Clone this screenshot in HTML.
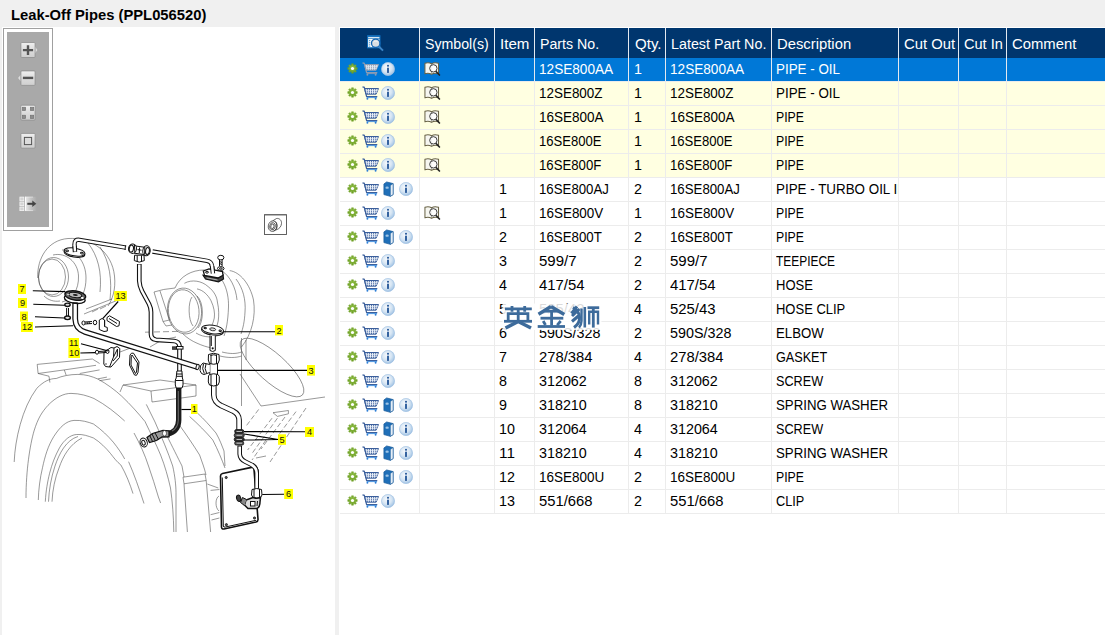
<!DOCTYPE html>
<html><head><meta charset="utf-8"><title>Leak-Off Pipes</title>
<style>
html,body{margin:0;padding:0}
body{width:1105px;height:635px;overflow:hidden;position:relative;background:#f0f0f0;font-family:"Liberation Sans",sans-serif;font-size:15.4px}
.abs,.t,.row,.hd,.vs,.vsh,.ic,.clip{position:absolute}
.t{white-space:nowrap;line-height:17px;height:17px;transform-origin:0 50%;display:block}
.row{left:340px;width:765px;height:23px;border-bottom:1px solid #ececec}
.hd{background:#00366e}
.vs{top:82px;width:1px;height:432px;background:#ececec}
.vsh{top:28px;width:1px;height:30px;background:#e4e9f0}
.clip{height:23px;overflow:hidden}
#title{left:10.6px;top:6.6px;font-weight:bold;font-size:14.7px;line-height:17px;white-space:nowrap;transform-origin:0 50%;transform:scaleX(1.0054);color:#000}
#lp{left:2px;top:27px;width:333px;height:608px;background:#fff}
#rp{left:339px;top:27px;width:766px;height:608px;background:#fff}
#tb{left:3px;top:28px;width:48px;height:201px;border:1px solid #a0a0a0;background:#fff}
#tbi{left:7px;top:32px;width:42px;height:195px;background:#a9a9a9}
</style></head><body>
<svg width="0" height="0" style="position:absolute">
<defs>
<radialGradient id="ig" cx=".42" cy=".38" r=".65"><stop offset="0" stop-color="#f7fafd"/><stop offset=".55" stop-color="#d6e5f3"/><stop offset="1" stop-color="#9cc0e3"/></radialGradient>
<radialGradient id="gg" cx=".5" cy=".4" r=".6"><stop offset="0" stop-color="#8fbe45"/><stop offset="1" stop-color="#6c9f22"/></radialGradient>
<symbol id="gear" viewBox="0 0 12 12"><path d="M4.97,2.40 L5.00,0.85 L7.00,0.85 L7.03,2.40 L7.82,2.72 L8.94,1.65 L10.35,3.06 L9.28,4.18 L9.60,4.97 L11.15,5.00 L11.15,7.00 L9.60,7.03 L9.28,7.82 L10.35,8.94 L8.94,10.35 L7.82,9.28 L7.03,9.60 L7.00,11.15 L5.00,11.15 L4.97,9.60 L4.18,9.28 L3.06,10.35 L1.65,8.94 L2.72,7.82 L2.40,7.03 L0.85,7.00 L0.85,5.00 L2.40,4.97 L2.72,4.18 L1.65,3.06 L3.06,1.65 L4.18,2.72Z" fill="url(#gg)" stroke="#6fa024" stroke-width=".5" stroke-linejoin="round"/><circle cx="6" cy="6" r="1.75" fill="#fff"/></symbol>
<symbol id="cart" viewBox="0 0 17 14"><path d="M2.600,2.500 H16.500 L14.100,8.200 H3.900 Z" fill="#e9eff8" stroke="#3b5f9c" stroke-width="1"/><path d="M5.300,2.500 V8 M7.400,2.500 V8 M9.500,2.500 V8 M11.600,2.500 V8 M13.700,2.500 V8" stroke="#3b5f9c" stroke-width=".9"/><path d="M3,4.400 H15.800 M3.500,6.300 H15" stroke="#e9eff8" stroke-width=".7"/><path d="M.5,.8 L2.300,1.300 L4.600,10.700 H15.300" fill="none" stroke="#3b5f9c" stroke-width="1.200"/><path d="M4.800,11.600 H15" stroke="#3d8fe0" stroke-width=".9"/><circle cx="5.400" cy="12.700" r=".95" fill="#2f7fd6"/><circle cx="13.600" cy="12.700" r=".95" fill="#2f7fd6"/></symbol>
<symbol id="carts" viewBox="0 0 17 14"><path d="M2.600,2.500 H16.500 L14.100,8.200 H3.900 Z" fill="#e2e8f0" stroke="#8c9bb2" stroke-width="1"/><path d="M5.300,2.500 V8 M7.400,2.500 V8 M9.500,2.500 V8 M11.600,2.500 V8 M13.700,2.500 V8" stroke="#8c9bb2" stroke-width=".9"/><path d="M3,4.400 H15.800 M3.500,6.300 H15" stroke="#e2e8f0" stroke-width=".7"/><path d="M.5,.8 L2.300,1.300 L4.600,10.700 H15.300" fill="none" stroke="#8c9bb2" stroke-width="1.200"/><path d="M4.800,11.600 H15" stroke="#8c9bb2" stroke-width=".9"/><circle cx="5.400" cy="12.700" r=".95" fill="#8c9bb2"/><circle cx="13.600" cy="12.700" r=".95" fill="#8c9bb2"/></symbol>
<symbol id="info" viewBox="0 0 14 14"><circle cx="7" cy="7" r="6.700" fill="url(#ig)"/><circle cx="7" cy="7" r="6.500" fill="none" stroke="#9dc0e2" stroke-width=".6"/><rect x="6.050" y="5.700" width="1.900" height="5.200" fill="#2c5c9c"/><rect x="6.050" y="2.900" width="1.900" height="1.700" fill="#2c5c9c"/></symbol>
<symbol id="book" viewBox="0 0 12 17"><path d="M1 3L4 .8L11 2.6V14.6L8 16.5L1 14.6Z" fill="#1f6fb8" stroke="#185a99" stroke-width=".8"/><path d="M8 4.6L11 2.6V14.6L8 16.5Z" fill="#e6eef6" stroke="#185a99" stroke-width=".6"/><ellipse cx="4.5" cy="7" rx="1.8" ry="1.3" fill="#9cc3e6"/></symbol>
<symbol id="sym" viewBox="0 0 18 15"><path d="M1,1.400 C3.400,.500 6,.700 8,1.900 C10,.700 12.600,.500 15.400,1.400 V12.300 C12.600,11.600 10,11.800 8,13 C6,11.800 3.400,11.600 1,12.300 Z" fill="#f6f6f0" stroke="#6a6448" stroke-width="1.100"/><path d="M8,1.900 V13" stroke="#8a8a7a" stroke-width=".8"/><circle cx="9.900" cy="6.700" r="3.900" fill="#fff" fill-opacity=".85" stroke="#333" stroke-width="1"/><path d="M12.600,9.700 L16.800,14.300" stroke="#222" stroke-width="1.600"/></symbol>
<symbol id="hdic" viewBox="0 0 17 17"><rect x=".6" y=".8" width="12.400" height="12" fill="#fff" stroke="#0d6ab8" stroke-width="1.100"/><rect x=".6" y=".6" width="12.400" height="1.300" fill="#0d6ab8"/><path d="M.6,3.300 H13" stroke="#0d6ab8" stroke-width=".8"/><path d="M2.200 5.400H3.300M2.200 7.300H3.300M2.200 9.200H3.300M2.200 11.100H3.300" stroke="#0d6ab8" stroke-width=".9"/><circle cx="8.700" cy="8.300" r="4.200" fill="#d9dde2" stroke="#1465b2" stroke-width="1.300"/><path d="M6.500,7.200 C7.500,6 9.500,5.800 10.800,7" stroke="#f4f6f8" stroke-width="1" fill="none"/><path d="M11.900,11.500 L16,15.600" stroke="#3c86c8" stroke-width="1.900"/></symbol>
</defs>

</svg>
<div id="title" class="abs">Leak-Off Pipes (PPL056520)</div>
<div id="lp" class="abs"></div>
<div id="rp" class="abs"></div>
<div id="tb" class="abs"></div>
<div id="tbi" class="abs"></div>
<svg class="abs" style="left:0;top:27px" width="335" height="608" viewBox="0 27 335 608">
<style>
.g{fill:none;stroke:#444;stroke-width:.55}
.k{fill:none;stroke:#111;stroke-width:1}
.kf{fill:#fff;stroke:#111;stroke-width:1}
.po{fill:none;stroke:#111;stroke-linecap:butt;stroke-linejoin:round}
.pi{fill:none;stroke:#fff;stroke-linecap:butt;stroke-linejoin:round}
.ld{fill:none;stroke:#000;stroke-width:1.150}
.lb{fill:#ffff00}
.lt{font-family:"Liberation Sans",sans-serif;font-size:9.2px;fill:#111}
</style>
<!-- ===== grey background lines ===== -->
<g class="g">
<!-- left turbo -->
<ellipse cx="52" cy="277" rx="13.5" ry="18"/>
<ellipse cx="53.5" cy="277" rx="15" ry="19.5"/>
<path d="M53,255 C66,252 78,262 78.500,276 C79,290 72,300 62,302"/>
<path d="M62,250 C76,249 86,262 86,278 C86,290 82,298 77,303"/>
<path d="M37.700,278 C37,258 48,240 68,238.500 C92,237 112,252 114.500,276 C116,290 112,300 108,306"/>
<path d="M88,243 C98,256 102,272 100,292"/>
<path d="M100,247 C110,262 112,280 110,300"/>
<path d="M44,296 C48,300 54,302 60,301"/>
<path d="M86,309 L112,299 M84,314 L118,300 M92,312 L98,309 M100,309 L106,306"/>
<!-- right turbo -->
<ellipse cx="183.700" cy="311" rx="15.300" ry="21.300" transform="rotate(-6 183.700 311)"/>
<ellipse cx="184.500" cy="311" rx="17" ry="23" transform="rotate(-6 184.500 311)"/>
<path d="M192,297 C188,302 188,320 193,326"/>
<path d="M197,296 C204,302 204,322 198,328"/>
<path d="M175,288 C180,276 192,270 204,270 C222,270 229,290 228.500,307 C228,322 226,330 224,336"/>
<path d="M184.400,283.300 C192,279 202,281 208,286.500 C214,291 217,297 217.400,302 C219,309 219,316 218.200,321 C217,327 215,331 212.700,333.700"/>
<path d="M197,288.900 C203,290 208,295 211,300.700 C214,307 215,313 214.300,318 C213,324 211,328 208,330.600"/>
<path d="M145,332.200 L178,331.400" stroke-dasharray="6 3"/>
<path d="M182.800,333.700 C187,338 192,341 197,343.200 C202,345.500 207,347 211,347.800"/>
<path d="M229.700,270.600 C240,272 250,284 253.500,300 C256,316 252,334 241.500,347"/>
<path d="M236,279 C243,288 246,300 245,312 C244.500,322 243,328 241,334"/>
<path d="M222,271 C230,276 236,288 237,300"/>
<path d="M154,292 L163.500,289.500 L175,288 M154,292 L163,321.500 L169.500,320 L160,291"/>
<path d="M163,321.500 L166,326 L172,325"/>
<path d="M196,333 C204,338 214,338 222,334"/>
<path d="M241.500,338 L241.500,406"/>
<path d="M246,340 L246,360"/>
<path d="M220,356 C228,358 236,358 241.500,356 M222,352 C230,354 236,354 241.500,352"/>
<ellipse cx="272" cy="367.500" rx="41" ry="14" transform="rotate(42 272 367.500)"/>
<path d="M240,374 L261,406 L325,397"/>
<!-- engine block -->
<path d="M37.200,364.400 L92.400,359 L99.600,363.500 M37.200,364.400 L38.100,373.500 L49,376.200 L49.900,382.500 M64.300,369.900 L96,365.300 M64.300,369.900 L66.200,375.300 M38.100,373.500 L64.300,369.900 M79.700,373.500 L99.600,369.900 M97.800,378.900 L106.900,377.100 M99.600,380.700 L110.500,378.900"/>
<path d="M0,0"/>
<path d="M123,385 L160,380 L196,385 L196,396 L152,402 L151,391 L123,385 M151,391 L196,385"/>
<path d="M123,385 L120,392 M120,352 L133,347"/>
<path d="M150,347 L162,340 L176,337"/>
<!-- flywheel arcs -->
<path d="M14.200,462 C15,440 22,408 36.800,388.300 C44,381 50,378.500 56.200,378.500 C62,376 70,374.400 77.900,374.400 C86,374.400 92,376.500 97.800,379 C107,384 115,390 121.500,396 C131,405 138,413 145,421.500 C151,434 156,444 160.600,455 C165,466 168,477 170.500,488 C172.500,502 173.500,516 173.800,532"/>
<path d="M26,498 C26,470 30,445 34,431 C38,418 42,412 48,405.300 C56,397 64,393.400 71,393.400 C80,393.400 88,396 94,398.500 C106,405 116,413 124.700,421"/>
<path d="M134,433 C140,444 145,455 148.500,466 C152,476 155.500,487 158.400,497 L160.600,503"/>
<path d="M38.300,500 C38.500,490 40,478 42.500,467.700 C45,456 48,446 53.800,436.500 C60,427 66,421 74,420.400 C82,420 88,422 93.500,424 C102,430 108,436 113.300,442.200 C118,448 122,454 124.700,459"/>
<path d="M128.600,461.700 C134,474 139,488 144,503.500"/>
<path d="M45.300,501.700 C46,490 47.500,482 49.600,473.300 C52,464 55,456 59.500,447.800 C64,440 70,435 76.500,434.500 C83,434 88,436 93.500,438 C100,442 106,448 110.500,453.500 C114,458 117,462 120.900,465 C126,474 130,484 133,493.600"/>
<path d="M48.500,501.700 C49,490 51,478 55,466 C59,454 66,440 78,436.500"/>
<path d="M52,501.700 C52.500,490 55,478 59,468 C63,456 70,444 82,438"/>
<path d="M146.300,404.400 L155,422 C162,438 168,452 172.700,466 C175,476 176,486 176,492.500 L176,532"/>
<path d="M166.500,435 C172,446 178,458 182,466 L184,477"/>
<path d="M178.600,424 C186,434 194,446 199.600,455 C202,462 204.500,468 206,475"/>
<path d="M189.600,416.500 C198,424 206,432 212.800,440 C218,450 222,460 225,468"/>
<path d="M197.400,413 C204,419 210,426 216,433 C220,440 222,446 224,451 L225,466"/>
<path d="M183,477.200 L205,474 L206.200,480.500 L184,483.800 Z M184,483.800 L187.400,532 M206.200,480.500 L210.600,532"/>
<path d="M207.300,484 L218.300,488 M210.600,490.400 L219.400,489.500 M210.600,514.700 L219.400,512.500 M211.500,520 L219.400,518"/>
<path d="M219,496 C215,498 215,508 219,511"/>
<!-- right lower hatch lines -->
<g stroke-dasharray="5 2.500">
<path d="M258.700,409.400 L245.400,427"/>
<path d="M306,408 L270,462"/>
<path d="M272,418.200 L247.600,450"/>
<path d="M277.400,418.200 L252,453.500"/>
<path d="M285,417 L261,449"/>
<path d="M296,411.600 L279.600,433.600"/>
<path d="M266,440 L252,460"/>
</g>
<path d="M273,412.700 L288.400,410.500 L288.400,413.800 L277.400,416.400 Z"/>
<path d="M256,458 L266,456"/>
</g>
<!-- ===== pipes ===== -->
<!-- top left pipe -->
<path class="po" stroke-width="4.400" d="M75,252 L74.500,244.500 Q74.300,239.200 79.500,239.900 L126,247.600"/>
<path class="pi" stroke-width="2.400" d="M75,252 L74.500,244.500 Q74.300,239.200 79.500,239.900 L126.500,247.700"/>
<path class="k" d="M125.500,245.500 L125,250"/>
<!-- top right pipe -->
<path class="po" stroke-width="4.400" d="M152.500,251.500 L207,260.800 Q211.500,261.500 212,266 L213,272"/>
<path class="pi" stroke-width="2.400" d="M152,251.400 L207,260.800 Q211.500,261.500 212,266 L213,272.500"/>
<!-- down pipe from T -->
<path class="po" stroke-width="4.700" d="M139.300,264 L139.300,281 Q139.500,286 142,291 L149,304 Q151,308 151,312 L151,334 Q151,339 156,339.800 L174,341 Q179,341.500 179.500,346 L179.500,372"/>
<path class="pi" stroke-width="2.500" d="M139.300,264.500 L139.300,281 Q139.500,286 142,291 L149,304 Q151,308 151,312 L151,334 Q151,339 156,339.800 L174,341 Q179,341.500 179.500,346 L179.500,372"/>
<!-- pipe 12 -->
<path class="po" stroke-width="5.800" d="M75.200,302 L75.200,319 Q75.500,329 85,332 L197.500,367"/>
<path class="pi" stroke-width="3.300" d="M75.200,302 L75.200,319 Q75.500,329 85,332 L197,366.800"/>
<ellipse class="kf" cx="197.600" cy="367" rx="1.500" ry="2.700" transform="rotate(17 197.600 367)"/>
<!-- pipe from tee 3 to hose clips -->
<path class="po" stroke-width="5.600" d="M213.800,386 L213.800,395 Q214,402 221,405.500 L233,411 Q239,414 239.100,420 L239.100,431"/>
<path class="pi" stroke-width="3.600" d="M213.800,386 L213.800,395 Q214,402 221,405.500 L233,411 Q239,414 239.100,420 L239.100,431"/>
<!-- pipe from clips to elbow 6 -->
<path class="po" stroke-width="4.600" d="M239.700,445.500 L239.700,454 Q240,459 245,461.500 L252,465 Q256.500,467.500 256.700,473 L256.700,490"/>
<path class="pi" stroke-width="2.600" d="M239.700,446.500 L239.700,454 Q240,459 245,461.500 L252,465 Q256.500,467.500 256.700,473 L256.700,490"/>
<!-- hose 1 -->
<path d="M178.700,386 L178.700,420 Q178.500,431.500 167.500,434" fill="none" stroke="#1c1c1c" stroke-width="5.400" stroke-linecap="butt"/>
<path d="M178.300,391 L178.300,420 Q178,428 172,431" fill="none" stroke="#6a6a6a" stroke-width="1.100"/>
<!-- ===== fittings ===== -->
<!-- left top flange -->
<g transform="rotate(9 74.600 252)"><ellipse cx="74.600" cy="253.200" rx="10.500" ry="3.900" class="kf"/><ellipse cx="74.600" cy="252" rx="10.500" ry="3.900" class="kf"/><ellipse cx="67" cy="252" rx="1.400" ry=".9" class="k" stroke-width=".7"/><ellipse cx="82" cy="252" rx="1.400" ry=".9" class="k" stroke-width=".7"/></g>
<path class="po" stroke-width="4.400" d="M75,252 L74.600,246"/><path class="pi" stroke-width="2.400" d="M75,251.500 L74.600,245.500"/>
<!-- T fitting -->
<g>
<path d="M134,245.800 L145,247.300 L145,254.600 L134,253.200 Z" fill="#fff" stroke="#111" stroke-width="1"/>
<ellipse cx="132.500" cy="248.700" rx="4" ry="4.700" class="kf" transform="rotate(8 132.500 248.700)" stroke-width="1.600"/>
<ellipse cx="131.400" cy="248.600" rx="2.100" ry="3.500" class="k" transform="rotate(8 131.400 248.600)" stroke-width=".8"/>
<path d="M134.500,245 L134.800,252.500" class="k" stroke-width=".7"/>
<ellipse cx="146.500" cy="250.800" rx="3.700" ry="5" class="kf" transform="rotate(8 146.500 250.800)" stroke-width="1.600"/>
<ellipse cx="147.500" cy="251" rx="1.900" ry="3.500" class="k" transform="rotate(8 147.500 251)" stroke-width=".8"/>
<path d="M144.800,247 L144.600,254.700" class="k" stroke-width=".7"/>
<path d="M134.600,255.200 L144,255.200 L144.300,260.600 Q139.300,263.600 134.300,260.600 Z" class="kf" stroke-width="1.500"/>
<path d="M137.200,255.500 L137.200,261.800 M141.500,255.500 L141.500,261.800" class="k" stroke-width=".7"/>
<path d="M137.500,249.600 L141.500,250.200 M139.500,247.500 L139.300,253" class="k" stroke-width=".9"/>
</g>
<!-- right top flange -->
<g>
<path d="M203,275.200 L205.500,279 L218.500,281.800 L223.600,279 L223,275 L218,278 L205,275.500 Z" fill="#444" stroke="#111" stroke-width="1.100"/>
<path d="M203.300,271 L209,268.800 L222.500,271.500 L223,275.200 L218,278 L204.500,275.500 Z" fill="#fff" stroke="#111" stroke-width="1.300"/>
<path d="M206.500,277.800 L217.500,280" stroke="#ccc" stroke-width=".8" fill="none"/>
<ellipse cx="207" cy="272.200" rx="1.500" ry=".9" class="k" stroke-width=".7"/>
</g>
<path class="po" stroke-width="4.400" d="M212,266 L213,273.500"/><path class="pi" stroke-width="2.400" d="M211.900,265 L213,274"/>
<!-- bolt at right flange -->
<ellipse cx="220.800" cy="257.600" rx="3.100" ry="2.300" class="kf" stroke-width="1"/>
<path d="M219.500,260 L219.500,266 M222.100,260 L222.100,266" class="k" stroke-width=".9"/>
<path d="M219.500,261.500 L222,262.500 M219.500,263.500 L222,264.500" class="k" stroke-width=".6"/>
<ellipse cx="220.800" cy="268.500" rx="3.300" ry="1.900" class="kf" stroke-width="1.100"/><ellipse cx="220.800" cy="268.500" rx="1.300" ry=".7" class="k" stroke-width=".7"/>
<!-- flange 7 -->
<g transform="rotate(8 75.200 296)">
<ellipse cx="75.200" cy="299" rx="10.500" ry="4.300" fill="#fff" stroke="#111" stroke-width="1.300"/>
<ellipse cx="75.200" cy="295.500" rx="10.500" ry="4.600" fill="#666" stroke="#111" stroke-width="1.400"/>
<ellipse cx="75.200" cy="295" rx="6.500" ry="2.600" fill="#bbb" stroke="#111" stroke-width="1"/>
<ellipse cx="75.200" cy="295" rx="2.500" ry="1" fill="#222"/>
<ellipse cx="82.500" cy="297" rx="1.400" ry=".9" fill="#fff"/><ellipse cx="68" cy="295.500" rx="1.300" ry=".8" fill="#ccc"/>
</g>
<rect x="72.700" y="302.300" width="5" height="1.500" fill="#111"/>
<!-- washer 9, screw 8 -->
<ellipse cx="67.500" cy="304.800" rx="2.700" ry="1.700" fill="#ddd" stroke="#111" stroke-width="1.400"/>
<path d="M66.600,308 L66.600,316 M68.500,308 L68.500,316" class="k" stroke-width="1"/>
<ellipse cx="67.500" cy="317.800" rx="2.900" ry="1.800" fill="#ddd" stroke="#111" stroke-width="1.400"/>
<!-- screw & clip 13 -->
<ellipse cx="83.500" cy="323" rx="1.600" ry="2" class="kf" stroke-width=".9"/>
<path d="M85,322 L92,321.500 M85,324 L92,323.500 M87,322 L87.500,324 M89,321.800 L89.500,323.800" class="k" stroke-width=".7"/>
<ellipse cx="95" cy="322.500" rx="1.700" ry="2.300" class="kf" stroke-width="1"/>
<path d="M99.300,320 Q102.200,317 104.600,320 L104.600,326.500 L107.300,327.500 L107.300,331 L104,331.500 L99.300,329.500 Z" class="kf" stroke-width="1.100"/>
<path d="M104.600,320 L104.600,326.500" class="k" stroke-width=".8"/>
<path d="M107,317.500 L109.500,315.800 L119.500,321.500 L119,325.800 L116.500,326.500 L107,320.500 Z" class="kf" stroke-width="1"/>
<path d="M109,318.500 L117,323.500" class="k" stroke-width=".7"/>
<!-- cover plate 10/11 -->
<path d="M104,352.300 L111,347.500 L114,348 L113.500,357 L109.500,367 L105.500,366.500 L103.800,364 Z" class="kf" stroke-width="1.100"/>
<path d="M114,348 L117,346.500 L119.800,348.500 L119.500,357.500 L111,367 L109.500,367" class="k" stroke-width="1.100"/>
<path d="M113.500,357 L117.500,349 M117.500,349 L117.300,356 L113,361" class="k" stroke-width=".7"/>
<circle cx="106" cy="364" r=".7" fill="#111"/>
<ellipse cx="97" cy="352.200" rx="1.600" ry="2" class="kf" stroke-width="1"/>
<path d="M98.700,351.500 L106,351 M98.700,353 L106,352.500" class="k" stroke-width=".7"/>
<ellipse cx="107.500" cy="351.500" rx="1.500" ry="2" class="kf" stroke-width=".9"/>
<!-- gasket -->
<path d="M131.500,353.200 L133.500,353.200 L139,362 L138,372.500 L136.500,375.300 L134.500,375 L129.500,365 L130,355 Z" class="kf" stroke-width="1.100"/>
<path d="M132,355 L137.500,363 L136.500,372 L135.500,373.500 L131,365 L131.300,356.500 Z" class="k" stroke-width=".6"/>
<!-- small clamp on down pipe -->
<rect x="176.500" y="346.500" width="6.500" height="2.600" class="kf" stroke-width="1"/><rect x="172.300" y="346.800" width="4" height="2.600" fill="#444" stroke="#111" stroke-width=".6"/>
<!-- hose coupling above hose 1 -->
<path d="M176.900,371 L181.900,371 L182.400,378 L183,380 L183,385 L182,388 L176.200,388 L175.300,385 L175.300,380 L176.200,378 Z" class="kf" stroke-width="1.300"/>
<path d="M176.500,374 L182.200,374 M176.400,376.300 L182.400,376.300 M175.500,380.500 L183,380.500" class="k" stroke-width=".8"/>
<!-- hose end fitting -->
<path d="M169,430.800 L163,430.300 L152.500,433.500 L147,437.500 L149.500,442.500 L156.500,440.500 L162,437 L169,436.800 Z" fill="#999" stroke="#111" stroke-width="1.300"/>
<path d="M152,434 L155.500,441 M155,432.800 L158.500,439.500 M149.800,435.600 L152.700,441.800" class="k" stroke-width="1"/>
<ellipse cx="164.500" cy="433.300" rx="2" ry="2.800" fill="#fff" stroke="#111" stroke-width=".6"/>
<ellipse cx="143.700" cy="442.500" rx="3.500" ry="4.600" class="kf" stroke-width="1.300" transform="rotate(-20 143.700 442.500)"/>
<ellipse cx="143.500" cy="442.700" rx="1.600" ry="2.500" class="k" stroke-width=".8" transform="rotate(-20 143.500 442.700)"/>
<!-- flange 2 -->
<g transform="rotate(8 212.600 329.700)">
<ellipse cx="212.600" cy="330.900" rx="11" ry="4.200" class="kf" stroke-width="1.200"/>
<ellipse cx="212.600" cy="329.500" rx="11" ry="4.200" class="kf" stroke-width="1.200"/>
<ellipse cx="212.600" cy="329.300" rx="3" ry="1.400" fill="#ddd" stroke="#111" stroke-width=".8"/>
<ellipse cx="205" cy="329" rx="1.200" ry=".7" class="k" stroke-width=".6"/><ellipse cx="220.300" cy="329.700" rx="1.200" ry=".7" class="k" stroke-width=".6"/>
</g>
<path d="M210,335.500 L210,350.500 Q212.600,352.500 215.300,350.500 L215.300,335.800" class="kf" stroke-width="1.100"/>
<path d="M211.300,336 L211.300,346" class="k" stroke-width=".6"/>
<circle cx="212.700" cy="348.300" r="1.100" fill="#111"/>
<!-- tee 3 -->
<g>
<path d="M209.800,362 L217.500,362 L217.500,376 L209.800,376 Z" class="kf" stroke-width="1.500"/>
<path d="M208.500,354.500 Q213.700,352 219,354.500 L219.300,360 L218,363.500 Q213.700,365 209.500,363.500 L208.300,360 Z" class="kf" stroke-width="1.700"/>
<path d="M211,354.500 L211,363.800 M216.500,354.500 L216.500,363.800" class="k" stroke-width=".6"/>
<path d="M210.500,355.500 Q213.700,354 217,355.500" class="k" stroke-width=".8"/>
<path d="M208.500,376 L209.500,374.500 Q213.700,373 218,374.500 L219.300,376.500 L219.300,382 L218,385 Q213.700,387 209.500,385 L208.300,382 Z" class="kf" stroke-width="1.700"/>
<path d="M211,374.500 L211,385.500 M216.500,374.500 L216.500,385.500" class="k" stroke-width=".6"/>
<path d="M209.800,364.500 L203,363 Q199.500,365 200,370.500 Q201,374.500 204,374.500 L209.800,372.500" class="kf" stroke-width="1.700"/>
<path d="M203.500,364 Q201.500,368.500 204.300,373.500 M206,364 Q204,368.500 206.500,373" class="k" stroke-width=".6"/>
</g>
<!-- hose clips 4/5 -->
<g>
<rect x="234.700" y="429.600" width="9" height="3.600" rx="1.500" fill="#333" stroke="#111" stroke-width=".8"/>
<rect x="234.200" y="433.300" width="10" height="4" rx="1.800" fill="#555" stroke="#111" stroke-width=".8"/>
<rect x="234.200" y="437.400" width="10" height="4" rx="1.800" fill="#333" stroke="#111" stroke-width=".8"/>
<rect x="234.700" y="441.400" width="9" height="3.600" rx="1.500" fill="#555" stroke="#111" stroke-width=".8"/>
<path d="M236.500,431.500 L242,431.500 M236.500,435.300 L242,435.300 M236.500,439.500 L242,439.500 M236.500,443.200 L242,443.200" stroke="#ddd" stroke-width=".8" fill="none"/>
</g>
<!-- plate -->
<path d="M220.500,476.500 Q220.300,474 222.500,473.500 L251.500,467.400 Q254,467.100 254,469.500 L258,519 Q258.300,521.300 256,522 L224,529 Q221.500,529.300 221.500,527 Z" fill="#fff" stroke="#111" stroke-width="1.600"/>
<path d="M222.300,477.500 L223.300,526 Q223.500,527.500 225.500,527 L256,520.300" class="k" stroke-width=".7"/>
<circle cx="226.200" cy="477.500" r="1.100" fill="#555" stroke="#111" stroke-width=".8"/><circle cx="254.500" cy="518" r="1.100" fill="#555" stroke="#111" stroke-width=".8"/><circle cx="226.400" cy="524.700" r="1.100" fill="#555" stroke="#111" stroke-width=".8"/>
<!-- pipe over plate -->
<path class="po" stroke-width="4.600" d="M252,465 Q256.500,467.500 256.700,473 L256.700,490"/>
<path class="pi" stroke-width="2.600" d="M251,464.500 Q256.500,467.300 256.700,473 L256.700,490"/>
<!-- elbow 6 -->
<g>
<path d="M252,489.500 Q256.700,487.500 261.500,489.500 L262,495 L260.500,497.500 Q256.700,499 253,497.500 L251.500,495 Z" class="kf" stroke-width="1.700"/>
<path d="M254,489 L254,498 M259.500,489 L259.500,498" class="k" stroke-width=".6"/>
<path d="M253,497.500 L246,500 L244.500,505 L248,508.500 L257,508.500 Q260,507 260,502 L260.500,497.500 Q256.700,499 253,497.500 Z" fill="#ddd" stroke="#111" stroke-width="1.500"/>
<rect x="250.500" y="501.500" width="4.500" height="4.500" class="kf" stroke-width=".8"/>
<path d="M246.500,499.500 L242.500,497.500 L240.500,502.500 L244.500,505.500" fill="#888" stroke="#111" stroke-width="1"/>
<ellipse cx="238.700" cy="498.300" rx="2.100" ry="3.300" fill="#444" stroke="#111" stroke-width="1" transform="rotate(-15 238.700 498.300)"/>
<path d="M257.500,501 L257,506" class="k" stroke-width=".6"/>
</g>
<!-- icon box -->
<rect x="264.500" y="214.700" width="22" height="19.800" fill="#fff" stroke="#505050" stroke-width=".9"/>
<path d="M264.500,214.800 H286.500" stroke="#666" stroke-width="1.100" fill="none"/>
<g fill="none" stroke="#2a2a2a" stroke-width=".7">
<ellipse cx="272.600" cy="226.100" rx="4.300" ry="5.300" transform="rotate(12 272.600 226.100)"/>
<ellipse cx="272.500" cy="226.200" rx="2.800" ry="3.600" transform="rotate(12 272.500 226.200)"/>
<ellipse cx="272.400" cy="226.300" rx="1.600" ry="2.300" transform="rotate(12 272.400 226.300)"/>
<path d="M272.800,220.800 L276.500,218.500 C279.500,218 281.800,220.500 281.500,223.500 C281.300,226.500 279.500,228.700 276.400,229.800 L273.500,231.200"/>
<path d="M275.500,221.500 C277.500,223.500 277.500,228 275.800,230"/>
</g>
<!-- ===== leader lines ===== -->
<g class="ld">
<path d="M32.800,290.700 L65.300,291.600"/><path d="M33.300,304.200 L64.700,305.300"/><path d="M35,316.700 L64.200,318"/><path d="M35,327 L73,325.700"/>
<path d="M81,343.800 L108.500,351"/><path d="M80.400,353 L95.300,352.600"/>
<path d="M118.200,301.500 L102.700,318.600"/>
<path d="M223.600,331.700 L275,331.700"/><path d="M217.500,370.400 L307,370.400"/>
<path d="M181.400,409.500 L191,409.500"/>
<path d="M244,431.600 L305.200,431.800"/><path d="M244,434 L278.200,439.500 L244,440"/>
<path d="M262.300,494.500 L284,494.300"/>
</g>
<!-- ===== labels ===== -->
<rect class="lb" x="18" y="284" width="8" height="10"/><text class="lt" x="22.0" y="292.2" text-anchor="middle">7</text>
<rect class="lb" x="18" y="298" width="9" height="10"/><text class="lt" x="22.5" y="306.2" text-anchor="middle">9</text>
<rect class="lb" x="20" y="311.5" width="8" height="10"/><text class="lt" x="24.0" y="319.7" text-anchor="middle">8</text>
<rect class="lb" x="21" y="322" width="12" height="10"/><text class="lt" x="27.0" y="330.2" text-anchor="middle">12</text>
<rect class="lb" x="68.4" y="338" width="10.6" height="10"/><text class="lt" x="73.7" y="346.2" text-anchor="middle">11</text>
<rect class="lb" x="68.4" y="348" width="11.6" height="10"/><text class="lt" x="74.2" y="356.2" text-anchor="middle">10</text>
<rect class="lb" x="114.2" y="291" width="12.7" height="10"/><text class="lt" x="120.5" y="299.2" text-anchor="middle">13</text>
<rect class="lb" x="275" y="325" width="8" height="10.4"/><text class="lt" x="279.0" y="333.6" text-anchor="middle">2</text>
<rect class="lb" x="307" y="365" width="8" height="10.6"/><text class="lt" x="311.0" y="373.8" text-anchor="middle">3</text>
<rect class="lb" x="191" y="404" width="6.5" height="10"/><text class="lt" x="194.2" y="412.2" text-anchor="middle">1</text>
<rect class="lb" x="305" y="427" width="9" height="10"/><text class="lt" x="309.5" y="435.2" text-anchor="middle">4</text>
<rect class="lb" x="278" y="434.3" width="8" height="10.5"/><text class="lt" x="282.0" y="443.0" text-anchor="middle">5</text>
<rect class="lb" x="284.2" y="489" width="8.8" height="10"/><text class="lt" x="288.6" y="497.2" text-anchor="middle">6</text>
</svg>

<svg class="abs" style="left:0;top:27px" width="60" height="210" viewBox="0 27 60 210">
<defs><linearGradient id="bg" x1="0" y1="0" x2="0" y2="1"><stop offset="0" stop-color="#f0f0f0"/><stop offset=".5" stop-color="#dcdcdc"/><stop offset="1" stop-color="#cfcfcf"/></linearGradient>
<linearGradient id="bh" x1="0" y1="0" x2="1" y2="0"><stop offset="0" stop-color="#ededed"/><stop offset=".5" stop-color="#c4c4c4"/><stop offset="1" stop-color="#a9a9a9"/></linearGradient></defs>
<!-- plus -->
<path d="M35,46.500 L37.400,50 L35,53.500 Z" fill="#dedede"/>
<rect x="20.900" y="42.500" width="14.200" height="15" rx="1" fill="url(#bg)" stroke="#8e8e8e" stroke-width=".8"/>
<path d="M22.900,50.100 H33.100 M28,45.300 V55" stroke="#555" stroke-width="2.400"/>
<!-- minus -->
<path d="M20.900,74.500 L18.100,78 L20.900,81.500 Z" fill="#dedede"/>
<rect x="20.900" y="70.900" width="14.200" height="14.500" rx="1" fill="url(#bg)" stroke="#8e8e8e" stroke-width=".8"/>
<path d="M22.900,77.900 H33.200" stroke="#555" stroke-width="2.400"/>
<!-- grid -->
<rect x="20.900" y="105.200" width="14.200" height="14.900" rx="1" fill="url(#bg)" stroke="#8e8e8e" stroke-width=".8"/>
<g fill="#8c8c8c" stroke="#707070" stroke-width=".6"><rect x="22.300" y="107.200" width="3.400" height="3.400"/><rect x="30.300" y="107.200" width="3.400" height="3.400"/><rect x="22.300" y="115.200" width="3.400" height="3.400"/><rect x="30.300" y="115.200" width="3.400" height="3.400"/></g>
<!-- square -->
<rect x="20.900" y="133.400" width="14.200" height="14.800" rx="1" fill="url(#bg)" stroke="#8e8e8e" stroke-width=".8"/>
<rect x="24.400" y="137.400" width="7.200" height="7.200" fill="#dcdcdc" stroke="#555" stroke-width="1"/>
<!-- export -->
<rect x="25" y="196.800" width="11.800" height="14.100" fill="url(#bh)"/>
<path d="M25.400,196.800 V210.900" stroke="#fff" stroke-width="1"/>
<path d="M25,197.100 H33 M25,210.600 H33" stroke="#eee" stroke-width=".6"/>
<g fill="#d4d4d4" stroke="#f4f4f4" stroke-width=".8"><rect x="19.900" y="197.100" width="3.900" height="3.600"/><rect x="19.900" y="202" width="3.900" height="3.600"/><rect x="19.900" y="207" width="3.900" height="3.600"/></g>
<path d="M27.300,203.800 H33" stroke="#444" stroke-width="2"/><path d="M32.300,200.600 L36.300,203.800 L32.300,207 Z" fill="#444"/>
</svg>

<div class="hd" style="left:340px;top:28px;width:765px;height:30px"></div>
<span class="t" style="left:425px;top:34.5px;color:#fff;transform:scaleX(0.9210)">Symbol(s)</span>
<span class="t" style="left:500px;top:34.5px;color:#fff;transform:scaleX(0.9813)">Item</span>
<span class="t" style="left:540px;top:34.5px;color:#fff;transform:scaleX(0.9219)">Parts No.</span>
<span class="t" style="left:635px;top:34.5px;color:#fff;transform:scaleX(0.9784)">Qty.</span>
<span class="t" style="left:671px;top:34.5px;color:#fff;transform:scaleX(0.9291)">Latest Part No.</span>
<span class="t" style="left:777px;top:34.5px;color:#fff;transform:scaleX(0.9631)">Description</span>
<span class="t" style="left:904px;top:34.5px;color:#fff;transform:scaleX(0.9626)">Cut Out</span>
<span class="t" style="left:964px;top:34.5px;color:#fff;transform:scaleX(0.9458)">Cut In</span>
<span class="t" style="left:1012px;top:34.5px;color:#fff;transform:scaleX(0.9640)">Comment</span>
<svg class="ic" style="left:367px;top:35px" width="17" height="17"><use href="#hdic"/></svg>
<div class="row" style="top:58px;background:#0078d7"></div>
<svg class="ic" style="left:346.5px;top:63.3px" width="11" height="11"><use href="#gear"/></svg>
<svg class="ic" style="left:361.5px;top:61.5px" width="17" height="14"><use href="#carts"/></svg>
<svg class="ic" style="left:381px;top:62px" width="14" height="14"><use href="#info"/></svg>
<svg class="ic" style="left:423.5px;top:61.5px" width="17" height="14.2"><use href="#sym"/></svg>
<span class="t" style="left:539px;top:60px;color:#fff;transform:scaleX(0.8843)">12SE800AA</span>
<span class="t" style="left:634px;top:60px;color:#fff;transform:scaleX(0.9299)">1</span>
<span class="t" style="left:670px;top:60px;color:#fff;transform:scaleX(0.8843)">12SE800AA</span>
<div class="clip" style="left:776px;top:58px;width:122px"><span class="t" style="left:0px;top:2px;color:#fff;transform:scaleX(0.8693)">PIPE - OIL</span></div>
<div class="row" style="top:82px;background:#ffffe1"></div>
<svg class="ic" style="left:346.5px;top:87.3px" width="11" height="11"><use href="#gear"/></svg>
<svg class="ic" style="left:361.5px;top:85.5px" width="17" height="14"><use href="#cart"/></svg>
<svg class="ic" style="left:381px;top:86px" width="14" height="14"><use href="#info"/></svg>
<svg class="ic" style="left:423.5px;top:85.5px" width="17" height="14.2"><use href="#sym"/></svg>
<span class="t" style="left:539px;top:84px;color:#000;transform:scaleX(0.8735)">12SE800Z</span>
<span class="t" style="left:634px;top:84px;color:#000;transform:scaleX(0.9299)">1</span>
<span class="t" style="left:670px;top:84px;color:#000;transform:scaleX(0.8735)">12SE800Z</span>
<div class="clip" style="left:776px;top:82px;width:122px"><span class="t" style="left:0px;top:2px;color:#000;transform:scaleX(0.8693)">PIPE - OIL</span></div>
<div class="row" style="top:106px;background:#ffffe1"></div>
<svg class="ic" style="left:346.5px;top:111.3px" width="11" height="11"><use href="#gear"/></svg>
<svg class="ic" style="left:361.5px;top:109.5px" width="17" height="14"><use href="#cart"/></svg>
<svg class="ic" style="left:381px;top:110px" width="14" height="14"><use href="#info"/></svg>
<svg class="ic" style="left:423.5px;top:109.5px" width="17" height="14.2"><use href="#sym"/></svg>
<span class="t" style="left:539px;top:108px;color:#000;transform:scaleX(0.8782)">16SE800A</span>
<span class="t" style="left:634px;top:108px;color:#000;transform:scaleX(0.9299)">1</span>
<span class="t" style="left:670px;top:108px;color:#000;transform:scaleX(0.8782)">16SE800A</span>
<div class="clip" style="left:776px;top:106px;width:122px"><span class="t" style="left:0px;top:2px;color:#000;transform:scaleX(0.7966)">PIPE</span></div>
<div class="row" style="top:130px;background:#ffffe1"></div>
<svg class="ic" style="left:346.5px;top:135.3px" width="11" height="11"><use href="#gear"/></svg>
<svg class="ic" style="left:361.5px;top:133.5px" width="17" height="14"><use href="#cart"/></svg>
<svg class="ic" style="left:381px;top:134px" width="14" height="14"><use href="#info"/></svg>
<svg class="ic" style="left:423.5px;top:133.5px" width="17" height="14.2"><use href="#sym"/></svg>
<span class="t" style="left:539px;top:132px;color:#000;transform:scaleX(0.8504)">16SE800E</span>
<span class="t" style="left:634px;top:132px;color:#000;transform:scaleX(0.9299)">1</span>
<span class="t" style="left:670px;top:132px;color:#000;transform:scaleX(0.8504)">16SE800E</span>
<div class="clip" style="left:776px;top:130px;width:122px"><span class="t" style="left:0px;top:2px;color:#000;transform:scaleX(0.7966)">PIPE</span></div>
<div class="row" style="top:154px;background:#ffffe1"></div>
<svg class="ic" style="left:346.5px;top:159.3px" width="11" height="11"><use href="#gear"/></svg>
<svg class="ic" style="left:361.5px;top:157.5px" width="17" height="14"><use href="#cart"/></svg>
<svg class="ic" style="left:381px;top:158px" width="14" height="14"><use href="#info"/></svg>
<svg class="ic" style="left:423.5px;top:157.5px" width="17" height="14.2"><use href="#sym"/></svg>
<span class="t" style="left:539px;top:156px;color:#000;transform:scaleX(0.8568)">16SE800F</span>
<span class="t" style="left:634px;top:156px;color:#000;transform:scaleX(0.9299)">1</span>
<span class="t" style="left:670px;top:156px;color:#000;transform:scaleX(0.8568)">16SE800F</span>
<div class="clip" style="left:776px;top:154px;width:122px"><span class="t" style="left:0px;top:2px;color:#000;transform:scaleX(0.7966)">PIPE</span></div>
<div class="row" style="top:178px;background:#ffffff"></div>
<svg class="ic" style="left:346.5px;top:183.3px" width="11" height="11"><use href="#gear"/></svg>
<svg class="ic" style="left:361.5px;top:181.5px" width="17" height="14"><use href="#cart"/></svg>
<svg class="ic" style="left:382.5px;top:181px" width="11" height="16"><use href="#book"/></svg>
<svg class="ic" style="left:399px;top:182px" width="14" height="14"><use href="#info"/></svg>
<span class="t" style="left:499px;top:180px;color:#000;transform:scaleX(0.9299)">1</span>
<span class="t" style="left:539px;top:180px;color:#000;transform:scaleX(0.8600)">16SE800AJ</span>
<span class="t" style="left:634px;top:180px;color:#000;transform:scaleX(0.9299)">2</span>
<span class="t" style="left:670px;top:180px;color:#000;transform:scaleX(0.8600)">16SE800AJ</span>
<div class="clip" style="left:776px;top:178px;width:122px"><span class="t" style="left:0px;top:2px;color:#000;transform:scaleX(0.8697)">PIPE - TURBO OIL INLET</span></div>
<div class="row" style="top:202px;background:#ffffff"></div>
<svg class="ic" style="left:346.5px;top:207.3px" width="11" height="11"><use href="#gear"/></svg>
<svg class="ic" style="left:361.5px;top:205.5px" width="17" height="14"><use href="#cart"/></svg>
<svg class="ic" style="left:381px;top:206px" width="14" height="14"><use href="#info"/></svg>
<svg class="ic" style="left:423.5px;top:205.5px" width="17" height="14.2"><use href="#sym"/></svg>
<span class="t" style="left:499px;top:204px;color:#000;transform:scaleX(0.9299)">1</span>
<span class="t" style="left:539px;top:204px;color:#000;transform:scaleX(0.8734)">16SE800V</span>
<span class="t" style="left:634px;top:204px;color:#000;transform:scaleX(0.9299)">1</span>
<span class="t" style="left:670px;top:204px;color:#000;transform:scaleX(0.8734)">16SE800V</span>
<div class="clip" style="left:776px;top:202px;width:122px"><span class="t" style="left:0px;top:2px;color:#000;transform:scaleX(0.7966)">PIPE</span></div>
<div class="row" style="top:226px;background:#ffffff"></div>
<svg class="ic" style="left:346.5px;top:231.3px" width="11" height="11"><use href="#gear"/></svg>
<svg class="ic" style="left:361.5px;top:229.5px" width="17" height="14"><use href="#cart"/></svg>
<svg class="ic" style="left:382.5px;top:229px" width="11" height="16"><use href="#book"/></svg>
<svg class="ic" style="left:399px;top:230px" width="14" height="14"><use href="#info"/></svg>
<span class="t" style="left:499px;top:228px;color:#000;transform:scaleX(0.9299)">2</span>
<span class="t" style="left:539px;top:228px;color:#000;transform:scaleX(0.8641)">16SE800T</span>
<span class="t" style="left:634px;top:228px;color:#000;transform:scaleX(0.9299)">2</span>
<span class="t" style="left:670px;top:228px;color:#000;transform:scaleX(0.8641)">16SE800T</span>
<div class="clip" style="left:776px;top:226px;width:122px"><span class="t" style="left:0px;top:2px;color:#000;transform:scaleX(0.7966)">PIPE</span></div>
<div class="row" style="top:250px;background:#ffffff"></div>
<svg class="ic" style="left:346.5px;top:255.3px" width="11" height="11"><use href="#gear"/></svg>
<svg class="ic" style="left:361.5px;top:253.5px" width="17" height="14"><use href="#cart"/></svg>
<svg class="ic" style="left:381px;top:254px" width="14" height="14"><use href="#info"/></svg>
<span class="t" style="left:499px;top:252px;color:#000;transform:scaleX(0.9299)">3</span>
<span class="t" style="left:539px;top:252px;color:#000;transform:scaleX(0.9762)">599/7</span>
<span class="t" style="left:634px;top:252px;color:#000;transform:scaleX(0.9299)">2</span>
<span class="t" style="left:670px;top:252px;color:#000;transform:scaleX(0.9762)">599/7</span>
<div class="clip" style="left:776px;top:250px;width:122px"><span class="t" style="left:0px;top:2px;color:#000;transform:scaleX(0.7746)">TEEPIECE</span></div>
<div class="row" style="top:274px;background:#ffffff"></div>
<svg class="ic" style="left:346.5px;top:279.3px" width="11" height="11"><use href="#gear"/></svg>
<svg class="ic" style="left:361.5px;top:277.5px" width="17" height="14"><use href="#cart"/></svg>
<svg class="ic" style="left:381px;top:278px" width="14" height="14"><use href="#info"/></svg>
<span class="t" style="left:499px;top:276px;color:#000;transform:scaleX(0.9299)">4</span>
<span class="t" style="left:539px;top:276px;color:#000;transform:scaleX(0.9678)">417/54</span>
<span class="t" style="left:634px;top:276px;color:#000;transform:scaleX(0.9299)">2</span>
<span class="t" style="left:670px;top:276px;color:#000;transform:scaleX(0.9678)">417/54</span>
<div class="clip" style="left:776px;top:274px;width:122px"><span class="t" style="left:0px;top:2px;color:#000;transform:scaleX(0.8467)">HOSE</span></div>
<div class="row" style="top:298px;background:#ffffff"></div>
<svg class="ic" style="left:346.5px;top:303.3px" width="11" height="11"><use href="#gear"/></svg>
<svg class="ic" style="left:361.5px;top:301.5px" width="17" height="14"><use href="#cart"/></svg>
<svg class="ic" style="left:381px;top:302px" width="14" height="14"><use href="#info"/></svg>
<span class="t" style="left:499px;top:300px;color:#000;transform:scaleX(0.9299)">5</span>
<span class="t" style="left:539px;top:300px;color:#000;transform:scaleX(0.9678)">525/43</span>
<span class="t" style="left:634px;top:300px;color:#000;transform:scaleX(0.9299)">4</span>
<span class="t" style="left:670px;top:300px;color:#000;transform:scaleX(0.9678)">525/43</span>
<div class="clip" style="left:776px;top:298px;width:122px"><span class="t" style="left:0px;top:2px;color:#000;transform:scaleX(0.8434)">HOSE CLIP</span></div>
<div class="row" style="top:322px;background:#ffffff"></div>
<svg class="ic" style="left:346.5px;top:327.3px" width="11" height="11"><use href="#gear"/></svg>
<svg class="ic" style="left:361.5px;top:325.5px" width="17" height="14"><use href="#cart"/></svg>
<svg class="ic" style="left:381px;top:326px" width="14" height="14"><use href="#info"/></svg>
<span class="t" style="left:499px;top:324px;color:#000;transform:scaleX(0.9299)">6</span>
<span class="t" style="left:539px;top:324px;color:#000;transform:scaleX(0.9311)">590S/328</span>
<span class="t" style="left:634px;top:324px;color:#000;transform:scaleX(0.9299)">2</span>
<span class="t" style="left:670px;top:324px;color:#000;transform:scaleX(0.9311)">590S/328</span>
<div class="clip" style="left:776px;top:322px;width:122px"><span class="t" style="left:0px;top:2px;color:#000;transform:scaleX(0.8599)">ELBOW</span></div>
<div class="row" style="top:346px;background:#ffffff"></div>
<svg class="ic" style="left:346.5px;top:351.3px" width="11" height="11"><use href="#gear"/></svg>
<svg class="ic" style="left:361.5px;top:349.5px" width="17" height="14"><use href="#cart"/></svg>
<svg class="ic" style="left:381px;top:350px" width="14" height="14"><use href="#info"/></svg>
<span class="t" style="left:499px;top:348px;color:#000;transform:scaleX(0.9299)">7</span>
<span class="t" style="left:539px;top:348px;color:#000;transform:scaleX(0.9620)">278/384</span>
<span class="t" style="left:634px;top:348px;color:#000;transform:scaleX(0.9299)">4</span>
<span class="t" style="left:670px;top:348px;color:#000;transform:scaleX(0.9620)">278/384</span>
<div class="clip" style="left:776px;top:346px;width:122px"><span class="t" style="left:0px;top:2px;color:#000;transform:scaleX(0.8212)">GASKET</span></div>
<div class="row" style="top:370px;background:#ffffff"></div>
<svg class="ic" style="left:346.5px;top:375.3px" width="11" height="11"><use href="#gear"/></svg>
<svg class="ic" style="left:361.5px;top:373.5px" width="17" height="14"><use href="#cart"/></svg>
<svg class="ic" style="left:381px;top:374px" width="14" height="14"><use href="#info"/></svg>
<span class="t" style="left:499px;top:372px;color:#000;transform:scaleX(0.9299)">8</span>
<span class="t" style="left:539px;top:372px;color:#000;transform:scaleX(0.9299)">312062</span>
<span class="t" style="left:634px;top:372px;color:#000;transform:scaleX(0.9299)">8</span>
<span class="t" style="left:670px;top:372px;color:#000;transform:scaleX(0.9299)">312062</span>
<div class="clip" style="left:776px;top:370px;width:122px"><span class="t" style="left:0px;top:2px;color:#000;transform:scaleX(0.8217)">SCREW</span></div>
<div class="row" style="top:394px;background:#ffffff"></div>
<svg class="ic" style="left:346.5px;top:399.3px" width="11" height="11"><use href="#gear"/></svg>
<svg class="ic" style="left:361.5px;top:397.5px" width="17" height="14"><use href="#cart"/></svg>
<svg class="ic" style="left:382.5px;top:397px" width="11" height="16"><use href="#book"/></svg>
<svg class="ic" style="left:399px;top:398px" width="14" height="14"><use href="#info"/></svg>
<span class="t" style="left:499px;top:396px;color:#000;transform:scaleX(0.9299)">9</span>
<span class="t" style="left:539px;top:396px;color:#000;transform:scaleX(0.9299)">318210</span>
<span class="t" style="left:634px;top:396px;color:#000;transform:scaleX(0.9299)">8</span>
<span class="t" style="left:670px;top:396px;color:#000;transform:scaleX(0.9299)">318210</span>
<div class="clip" style="left:776px;top:394px;width:122px"><span class="t" style="left:0px;top:2px;color:#000;transform:scaleX(0.8600)">SPRING WASHER</span></div>
<div class="row" style="top:418px;background:#ffffff"></div>
<svg class="ic" style="left:346.5px;top:423.3px" width="11" height="11"><use href="#gear"/></svg>
<svg class="ic" style="left:361.5px;top:421.5px" width="17" height="14"><use href="#cart"/></svg>
<svg class="ic" style="left:382.5px;top:421px" width="11" height="16"><use href="#book"/></svg>
<svg class="ic" style="left:399px;top:422px" width="14" height="14"><use href="#info"/></svg>
<span class="t" style="left:499px;top:420px;color:#000;transform:scaleX(0.9299)">10</span>
<span class="t" style="left:539px;top:420px;color:#000;transform:scaleX(0.9299)">312064</span>
<span class="t" style="left:634px;top:420px;color:#000;transform:scaleX(0.9299)">4</span>
<span class="t" style="left:670px;top:420px;color:#000;transform:scaleX(0.9299)">312064</span>
<div class="clip" style="left:776px;top:418px;width:122px"><span class="t" style="left:0px;top:2px;color:#000;transform:scaleX(0.8217)">SCREW</span></div>
<div class="row" style="top:442px;background:#ffffff"></div>
<svg class="ic" style="left:346.5px;top:447.3px" width="11" height="11"><use href="#gear"/></svg>
<svg class="ic" style="left:361.5px;top:445.5px" width="17" height="14"><use href="#cart"/></svg>
<svg class="ic" style="left:382.5px;top:445px" width="11" height="16"><use href="#book"/></svg>
<svg class="ic" style="left:399px;top:446px" width="14" height="14"><use href="#info"/></svg>
<span class="t" style="left:499px;top:444px;color:#000;transform:scaleX(0.9963)">11</span>
<span class="t" style="left:539px;top:444px;color:#000;transform:scaleX(0.9299)">318210</span>
<span class="t" style="left:634px;top:444px;color:#000;transform:scaleX(0.9299)">4</span>
<span class="t" style="left:670px;top:444px;color:#000;transform:scaleX(0.9299)">318210</span>
<div class="clip" style="left:776px;top:442px;width:122px"><span class="t" style="left:0px;top:2px;color:#000;transform:scaleX(0.8600)">SPRING WASHER</span></div>
<div class="row" style="top:466px;background:#ffffff"></div>
<svg class="ic" style="left:346.5px;top:471.3px" width="11" height="11"><use href="#gear"/></svg>
<svg class="ic" style="left:361.5px;top:469.5px" width="17" height="14"><use href="#cart"/></svg>
<svg class="ic" style="left:382.5px;top:469px" width="11" height="16"><use href="#book"/></svg>
<svg class="ic" style="left:399px;top:470px" width="14" height="14"><use href="#info"/></svg>
<span class="t" style="left:499px;top:468px;color:#000;transform:scaleX(0.9299)">12</span>
<span class="t" style="left:539px;top:468px;color:#000;transform:scaleX(0.8766)">16SE800U</span>
<span class="t" style="left:634px;top:468px;color:#000;transform:scaleX(0.9299)">2</span>
<span class="t" style="left:670px;top:468px;color:#000;transform:scaleX(0.8766)">16SE800U</span>
<div class="clip" style="left:776px;top:466px;width:122px"><span class="t" style="left:0px;top:2px;color:#000;transform:scaleX(0.7966)">PIPE</span></div>
<div class="row" style="top:490px;background:#ffffff"></div>
<svg class="ic" style="left:346.5px;top:495.3px" width="11" height="11"><use href="#gear"/></svg>
<svg class="ic" style="left:361.5px;top:493.5px" width="17" height="14"><use href="#cart"/></svg>
<svg class="ic" style="left:381px;top:494px" width="14" height="14"><use href="#info"/></svg>
<span class="t" style="left:499px;top:492px;color:#000;transform:scaleX(0.9299)">13</span>
<span class="t" style="left:539px;top:492px;color:#000;transform:scaleX(0.9620)">551/668</span>
<span class="t" style="left:634px;top:492px;color:#000;transform:scaleX(0.9299)">2</span>
<span class="t" style="left:670px;top:492px;color:#000;transform:scaleX(0.9620)">551/668</span>
<div class="clip" style="left:776px;top:490px;width:122px"><span class="t" style="left:0px;top:2px;color:#000;transform:scaleX(0.8264)">CLIP</span></div>
<div class="vs" style="left:419px"></div>
<div class="vsh" style="left:419px"></div>
<div class="vsh" style="left:419px;top:58px;height:23px"></div>
<div class="vs" style="left:494px"></div>
<div class="vsh" style="left:494px"></div>
<div class="vsh" style="left:494px;top:58px;height:23px"></div>
<div class="vs" style="left:534px"></div>
<div class="vsh" style="left:534px"></div>
<div class="vsh" style="left:534px;top:58px;height:23px"></div>
<div class="vs" style="left:628px"></div>
<div class="vsh" style="left:628px"></div>
<div class="vsh" style="left:628px;top:58px;height:23px"></div>
<div class="vs" style="left:665px"></div>
<div class="vsh" style="left:665px"></div>
<div class="vsh" style="left:665px;top:58px;height:23px"></div>
<div class="vs" style="left:771px"></div>
<div class="vsh" style="left:771px"></div>
<div class="vsh" style="left:771px;top:58px;height:23px"></div>
<div class="vs" style="left:898px"></div>
<div class="vsh" style="left:898px"></div>
<div class="vsh" style="left:898px;top:58px;height:23px"></div>
<div class="vs" style="left:958px"></div>
<div class="vsh" style="left:958px"></div>
<div class="vsh" style="left:958px;top:58px;height:23px"></div>
<div class="vs" style="left:1006px"></div>
<div class="vsh" style="left:1006px"></div>
<div class="vsh" style="left:1006px;top:58px;height:23px"></div>
<svg class="abs" style="left:495px;top:298px" width="115" height="36" viewBox="495 298 115 36">
<defs><g id="wmg" fill="none" stroke-linecap="butt" stroke-linejoin="miter">
<!-- ying -->
<path d="M505,308.900 H531.800 M512,306 V311.700 M524.700,306 V311.700"/>
<path d="M508.200,321.200 V313.600 H527.900 V321.200"/>
<path d="M518.200,310 V321"/>
<path d="M504,321.300 H532"/>
<path d="M518.200,321.500 L505.500,328 M518.200,321.500 L531,328" stroke-width="3.600"/>
<!-- jin -->
<path d="M551,306.500 L538.500,314.300 M551,306.500 L564.300,314.500" stroke-width="3.400"/>
<path d="M544.300,311.200 H559.500"/>
<path d="M540.500,318.200 H563.300"/>
<path d="M551.600,312 V325.500"/>
<path d="M543.200,321 L545.500,325 M560.700,321 L557.200,325.200"/>
<path d="M537.700,326.500 H565"/>
<!-- shi -->
<path d="M577,306.500 L571.500,313.500 M572,316 L579.500,309 M573,307.500 C581,312 582,322 574,327.500 M572,321.500 L579.500,315" stroke-width="3"/>
<path d="M584.800,307 V327.500" stroke-width="2.600"/>
<path d="M581.500,308.500 V321 C581.500,324 580.500,326 579,327.600" stroke-width="2.400"/>
<path d="M587.500,307.700 H599.200"/>
<path d="M593.300,308 V327.600"/>
<path d="M589.200,324.500 V311.800 H598 V324.500" stroke-width="2.400"/>
</g></defs>
<rect x="502.500" y="303.500" width="99" height="26.500" fill="#fff" fill-opacity=".86"/>
<use href="#wmg" stroke="#fff" stroke-opacity=".8" stroke-width="5"/>
<use href="#wmg" stroke="#3d6b9b" stroke-width="2.800"/>
</svg>

</body></html>
